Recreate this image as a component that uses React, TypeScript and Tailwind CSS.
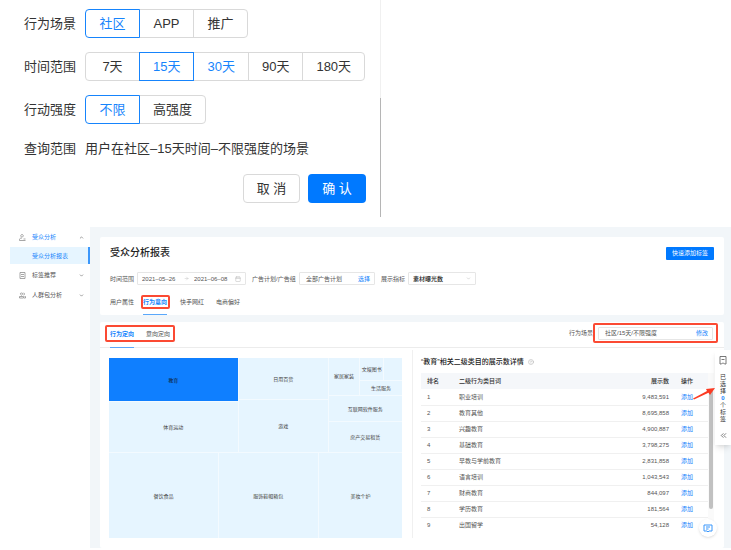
import { useState } from 'react';
import {
  ArrowRight,
  Calendar,
  ChevronDown,
  ChevronsLeft,
  ChevronUp,
  CircleHelp,
} from 'lucide-react';
import { clsx } from 'clsx';

const scenes = ['社区', 'APP', '推广'];
const ranges = ['7天', '15天', '30天', '90天', '180天'];
const levels = ['不限', '高强度'];

const rows = [
  ['职业培训', '9,483,591'],
  ['教育其他', '8,695,858'],
  ['兴趣教育', '4,900,887'],
  ['基础教育', '3,798,275'],
  ['早教与学前教育', '2,831,858'],
  ['语言培训', '1,043,543'],
  ['财商教育', '844,097'],
  ['学历教育', '181,564'],
  ['出国留学', '54,128'],
];

type SegmentProps = {
  label: string;
  items: string[];
  value: string;
  hovered?: string;
  onChange: (v: string) => void;
};

function Segment({ label, items, value, hovered, onChange }: SegmentProps) {
  return (
    <div className="flex items-center">
      <span className="w-[61px] shrink-0">{label}</span>
      <div className="flex" role="group" aria-label={label}>
        {items.map((item) => (
          <button
            key={item}
            aria-pressed={item === value}
            onClick={() => onChange(item)}
            className={clsx(
              '-ml-px h-[29px] min-w-[55px] border px-[13px] first:ml-0 first:rounded-l last:rounded-r',
              item === value
                ? 'relative z-10 border-[#1684fc] text-[#1684fc]'
                : 'border-[#d9d9d9]',
              item === hovered && 'text-[#1684fc]'
            )}
          >
            {item}
          </button>
        ))}
      </div>
    </div>
  );
}

function SceneDialog() {
  const [scene, setScene] = useState('社区');
  const [range, setRange] = useState('15天');
  const [level, setLevel] = useState('不限');

  return (
    <section className="flex w-full max-w-[381px] text-[13px] leading-5 text-[#333]">
      <div className="flex grow flex-col pt-[9px] pr-[14px] pb-[14px] pl-6">
        <div className="flex flex-col gap-[14px]">
          <Segment label="行为场景" items={scenes} value={scene} onChange={setScene} />
          <Segment label="时间范围" items={ranges} value={range} hovered="30天" onChange={setRange} />
          <Segment label="行动强度" items={levels} value={level} onChange={setLevel} />
          <p className="flex pt-px">
            <span className="w-[61px] shrink-0">查询范围</span>
            <span>用户在{scene}–{range}时间–{level}强度的场景</span>
          </p>
        </div>
        <div className="mt-[15px] flex justify-end gap-2">
          <button className="h-[29px] w-[57px] rounded border border-[#d9d9d9]">取 消</button>
          <button className="h-[29px] w-[58px] rounded bg-[#0079ff] text-white">确 认</button>
        </div>
      </div>
      <div className="flex w-px flex-col">
        <div className="h-[98px] bg-[#f0f0f0]" />
        <div className="grow bg-[#b5b5b5]" />
      </div>
    </section>
  );
}

function NavIcon({ d }: { d: string }) {
  return (
    <svg viewBox="0 0 14 14" className="mr-[6px] size-[7px]" fill="none" stroke="#8a8a8a" strokeWidth="1.5">
      <path d={d} />
    </svg>
  );
}

function Sidebar() {
  return (
    <nav className="w-20 shrink-0 text-[#555]">
      <a href="#analysis" className="flex h-5 items-center pr-[6px] pl-[9px] text-[#1684fc]">
        <NavIcon d="M6 1a2.500 2.500 0 1 0 .1 0zM1 13v-2c0-2 2-3 5-3M1 13h12M9 10h4" />
        <span className="grow">受众分析</span>
        <ChevronUp className="size-[5px] text-[#666]" strokeWidth={3} />
      </a>
      <a
        href="#report"
        className="flex h-[17px] items-center border-r-2 border-[#3b97fb] bg-[#e6f5ff] pl-[22px] text-[#1684fc]"
      >
        受众分析报表
      </a>
      <a href="#tags" className="mt-px flex h-5 items-center pr-[6px] pl-[9px]">
        <NavIcon d="M2 1h10v12H2zM4 5h6M4 9h6" />
        <span className="grow">标签推荐</span>
        <ChevronDown className="size-[5px] text-[#666]" strokeWidth={3} />
      </a>
      <a href="#packs" className="flex h-5 items-center pr-[6px] pl-[9px]">
        <NavIcon d="M5 2a2 2 0 1 0 .1 0zM9 2a2 2 0 0 1 0 4M1 12V9h8v3zM11 9h2v3h-3" />
        <span className="grow">人群包分析</span>
        <ChevronDown className="size-[5px] text-[#666]" strokeWidth={3} />
      </a>
    </nav>
  );
}

function FilterCard() {
  return (
    <section className="rounded-[2px] bg-white px-[10px] pt-[9px]">
      <div className="flex items-center justify-between">
        <h1 className="text-[10px] leading-[14px] font-medium text-[#222]">受众分析报表</h1>
        <button className="h-[13px] w-12 rounded-[1px] bg-[#0079ff] text-white">快速添加标签</button>
      </div>

      <div className="mt-3 flex items-center">
        <label htmlFor="from" className="w-[27px]">时间范围</label>
        <div className="flex h-[13px] w-[109px] items-center rounded-[1px] border border-[#e6e6e6] px-1">
          <input id="from" defaultValue="2021–05–26" className="w-[42px] outline-none" />
          <ArrowRight className="mr-[5px] size-[5px] text-[#bbb]" />
          <input aria-label="结束日期" defaultValue="2021–06–08" className="w-[40px] outline-none" />
          <Calendar className="ml-auto size-[6px] text-[#bbb]" />
        </div>
        <label htmlFor="plan" className="ml-[6px] w-[47px]">广告计划/广告组</label>
        <div className="flex h-[13px] w-[76px] items-center rounded-[1px] border border-[#e6e6e6] pr-1 pl-[6px]">
          <input id="plan" defaultValue="全部广告计划" className="w-0 grow outline-none" />
          <button className="text-[#1684fc]">选择</button>
        </div>
        <label htmlFor="metric" className="ml-[6px] w-[27px]">展示指标</label>
        <div className="flex h-[13px] w-[68px] items-center rounded-[1px] border border-[#e6e6e6] px-1">
          <select id="metric" className="w-0 grow appearance-none font-medium text-[#222] outline-none">
            <option>素材曝光数</option>
          </select>
          <ChevronDown className="size-[5px] text-[#aaa]" />
        </div>
      </div>

      <div className="mt-[10px] flex items-start gap-[6px]">
        <button className="h-[14px] w-[25px] text-left">用户属性</button>
        <div className="flex h-5 w-7 flex-col items-center justify-between">
          <button className="h-[14px] w-[29px] rounded-[2px] border-2 border-[#fb4a33] font-bold whitespace-nowrap text-[#1684fc]">
            <span className="-mx-1">行为意向</span>
          </button>
          <div className="h-px w-6 bg-[#5aa8fb]" />
        </div>
        <button className="ml-[5px] h-[14px] w-[24px]">快手网红</button>
        <button className="ml-[6px] h-[14px] w-[24px]">电商偏好</button>
      </div>
    </section>
  );
}

function Cell({ name, className }: { name?: string; className: string }) {
  return (
    <div className={clsx('flex items-center justify-center overflow-hidden whitespace-nowrap', className)}>
      {name}
    </div>
  );
}

function TreeMap() {
  return (
    <div className="flex h-[180px] flex-[294] flex-col gap-px bg-[#f3faff] text-[5px] leading-[6px] text-[#444]">
      <div className="flex flex-[95] gap-px">
        <div className="flex flex-[130] flex-col gap-px">
          <Cell name="教育" className="flex-[44] bg-[#0f7fff] text-[#123]" />
          <Cell name="体育运动" className="flex-[51] bg-[#e6f5ff]" />
        </div>
        <div className="flex flex-[90] flex-col gap-px">
          <Cell name="日用百货" className="flex-[42] bg-[#e6f5ff]" />
          <Cell name="游戏" className="flex-[53] bg-[#e6f5ff]" />
        </div>
        <div className="flex flex-[74] flex-col gap-px">
          <div className="flex flex-[38] gap-px">
            <Cell name="家居家装" className="flex-[31] bg-[#e6f5ff]" />
            <div className="flex flex-[43] flex-col gap-px">
              <div className="flex flex-[23] gap-px">
                <Cell name="文娱图书" className="flex-[24] bg-[#e6f5ff]" />
                <Cell className="flex-[18] bg-[#e6f5ff]" />
              </div>
              <Cell name="生活服务" className="flex-[14] bg-[#e6f5ff]" />
            </div>
          </div>
          <Cell name="互联网软件服务" className="flex-[26] bg-[#e6f5ff]" />
          <Cell name="房产交易租赁" className="flex-[31] bg-[#e6f5ff]" />
        </div>
      </div>
      <div className="flex flex-[85] gap-px">
        <Cell name="餐饮食品" className="flex-[110] bg-[#e6f5ff]" />
        <Cell name="服饰鞋帽箱包" className="flex-[100] bg-[#e6f5ff]" />
        <Cell name="美妆个护" className="flex-[84] bg-[#e6f5ff]" />
      </div>
    </div>
  );
}

function RankTable() {
  return (
    <div className="flex-[294]">
      <h2 className="flex items-center gap-1 text-[7px] font-medium text-[#222]">
        “教育”相关二级类目的展示数详情
        <CircleHelp className="size-[6px] text-[#aaa]" />
      </h2>
      <div className="mt-[7px] flex">
        <table className="grow table-fixed border-collapse">
          <thead>
            <tr className="h-4 bg-[#f5f7fa] text-left text-[#333]">
              <th className="w-[38px] pl-[6px] font-medium">排名</th>
              <th className="font-medium">二级行为类目词</th>
              <th className="w-[60px] text-right font-medium">展示数</th>
              <th className="w-[39px] pl-3 font-medium">操作</th>
            </tr>
          </thead>
          <tbody>
            {rows.map(([name, count], i) => (
              <tr key={name} className="h-4 border-b border-[#f0f0f0] last:border-0">
                <td className="pl-[6px]">{i + 1}</td>
                <td>{name}</td>
                <td className="text-right">{count}</td>
                <td className="pl-3">
                  <button className="text-[#1684fc]">添加</button>
                </td>
              </tr>
            ))}
          </tbody>
        </table>
        <div className="w-[6px] bg-[#fafafa] pt-4 pl-px">
          <div className="h-[120px] w-1 rounded-full bg-[#c1c1c1]" />
        </div>
      </div>
    </div>
  );
}

function DetailCard() {
  return (
    <section className="mt-[7px] rounded-[2px] bg-white">
      <div className="flex h-[26px] items-start justify-between border-b border-[#ececec] pr-[6px] pl-[5px]">
        <div className="pt-[3px]">
          <div className="flex h-[17px] w-[70px] items-center gap-3 rounded-[2px] border-2 border-[#fb4a33] pl-[3px]">
            <button className="font-bold text-[#1684fc]">行为定向</button>
            <button>意向定向</button>
          </div>
          <div className="mt-[5px] ml-[5px] h-px w-6 bg-[#5aa8fb]" />
        </div>
        <div className="flex items-center pt-px">
          <label htmlFor="scene">行为场景</label>
          <div className="flex h-5 w-[125px] items-center rounded-[2px] border-2 border-[#fb4a33] px-[3px]">
            <div className="flex h-[13px] grow items-center rounded-[1px] border border-[#e6e6e6] pr-1 pl-[6px]">
              <input id="scene" defaultValue="社区/15天/不限强度" className="w-0 grow outline-none" />
              <button className="text-[#1684fc]">修改</button>
            </div>
          </div>
        </div>
      </div>
      <div className="flex pt-[10px] pr-[10px] pb-[10px] pl-[9px]">
        <TreeMap />
        <div className="-mt-2 mr-2 ml-[10px] w-px bg-[#f0f0f0]" />
        <RankTable />
      </div>
    </section>
  );
}

function SelectedPanel() {
  return (
    <aside className="absolute top-[123px] right-0 flex h-[95px] w-4 flex-col items-center bg-white pt-[6px] leading-[7px] text-[#333] shadow-md">
      <svg viewBox="0 0 16 18" className="mb-[9px] h-[9px] w-2" fill="none" stroke="#555" strokeWidth="1.6">
        <path d="M2 1h12v15h-3l-2-2H7l-2 2H2zM5 7h6" />
      </svg>
      <span>已</span>
      <span>选</span>
      <span>择</span>
      <span className="font-bold text-[#1684fc]">0</span>
      <span>个</span>
      <span>标</span>
      <span>签</span>
      <ChevronsLeft className="mt-2 size-[9px] text-[#555]" />
    </aside>
  );
}

export default function App() {
  return (
    <div className="bg-white font-['Liberation_Sans','Noto_Sans_CJK_SC',sans-serif]">
      <SceneDialog />
      <div className="relative mt-[10px] flex pl-[10px] text-[6px] leading-[8px] text-[#555]">
        <Sidebar />
        <main className="min-w-0 grow bg-[#f2f6f9] pt-[10px] pr-[7px] pl-[10px]">
          <FilterCard />
          <DetailCard />
        </main>
        <SelectedPanel />
        {/* pointer from the first row to the floating panel */}
        <svg viewBox="0 0 22 14" className="absolute top-[160px] right-4 h-[14px] w-[22px]">
          <path d="M0 11.500 14 4l-1-2 9-1-5 7-1.500-2.200L1 12.500z" fill="#fb3a22" />
        </svg>
        <button
          aria-label="在线客服"
          className="absolute right-[14px] bottom-[11px] flex size-[18px] items-center justify-center rounded-full bg-white shadow"
        >
          <svg viewBox="0 0 20 18" className="h-[9px] w-[10px]" fill="none" stroke="#3b97fb" strokeWidth="2">
            <path d="M2 2h16v12h-6l-2 2-2-2H2z" />
            <path d="M6 6h8M6 10h5" />
          </svg>
        </button>
      </div>
    </div>
  );
}
